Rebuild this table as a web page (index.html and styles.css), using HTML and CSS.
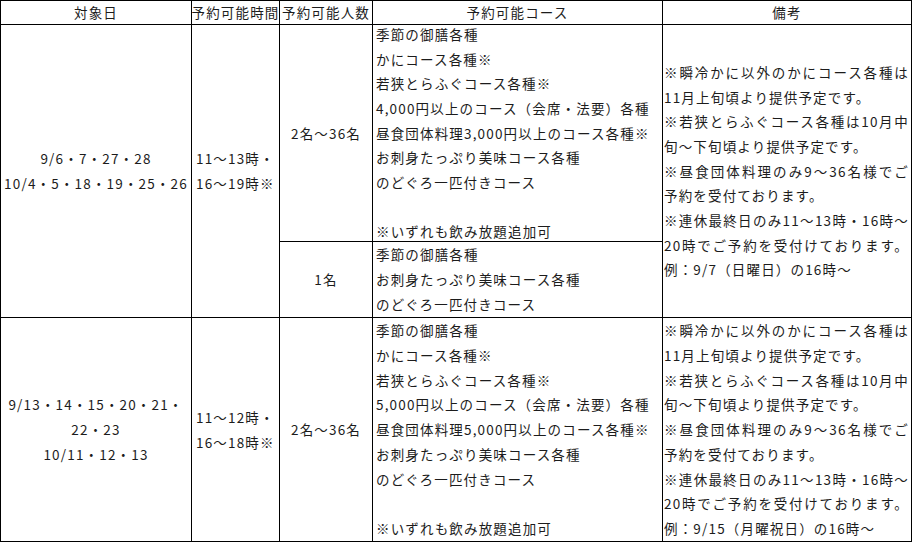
FILE: index.html
```html
<!DOCTYPE html>
<html lang="ja">
<head>
<meta charset="utf-8">
<title>予約可能日</title>
<link rel="stylesheet" href="styles.css">
</head>
<body>
<div class="sheet">
  <div class="cell head">対象日</div>
  <div class="cell head">予約可能時間</div>
  <div class="cell head">予約可能人数</div>
  <div class="cell head">予約可能コース</div>
  <div class="cell head">備考</div>

  <div class="cell center span2"><div>9/6・7・27・28<br>10/4・5・18・19・25・26</div></div>
  <div class="cell left time span2"><div>11〜13時・<br>16〜19時※</div></div>
  <div class="cell center">2名〜36名</div>
  <div class="cell left course"><div>季節の御膳各種<br>かにコース各種※<br>若狭とらふぐコース各種※<br>4,000円以上のコース（会席・法要）各種<br>昼食団体料理3,000円以上のコース各種※<br>お刺身たっぷり美味コース各種<br>のどぐろ一匹付きコース<br><br>※いずれも飲み放題追加可</div></div>
  <div class="cell left note span2"><div>
    <p class="j">※瞬冷かに以外のかにコース各種は</p>
    <p>11月上旬頃より提供予定です。</p>
    <p class="j">※若狭とらふぐコース各種は10月中</p>
    <p>旬〜下旬頃より提供予定です。</p>
    <p class="j">※昼食団体料理のみ9〜36名様でご</p>
    <p>予約を受付ております。</p>
    <p class="j">※連休最終日のみ11〜13時・16時〜</p>
    <p class="j">20時でご予約を受付けております。</p>
    <p>例：9/7（日曜日）の16時〜</p>
  </div></div>
  <div class="cell center">1名</div>
  <div class="cell left course"><div>季節の御膳各種<br>お刺身たっぷり美味コース各種<br>のどぐろ一匹付きコース</div></div>

  <div class="cell center"><div>9/13・14・15・20・21・<br>22・23<br>10/11・12・13</div></div>
  <div class="cell left time"><div>11〜12時・<br>16〜18時※</div></div>
  <div class="cell center">2名〜36名</div>
  <div class="cell left course"><div>季節の御膳各種<br>かにコース各種※<br>若狭とらふぐコース各種※<br>5,000円以上のコース（会席・法要）各種<br>昼食団体料理5,000円以上のコース各種※<br>お刺身たっぷり美味コース各種<br>のどぐろ一匹付きコース<br><br>※いずれも飲み放題追加可</div></div>
  <div class="cell left note"><div>
    <p class="j">※瞬冷かに以外のかにコース各種は</p>
    <p>11月上旬頃より提供予定です。</p>
    <p class="j">※若狭とらふぐコース各種は10月中</p>
    <p>旬〜下旬頃より提供予定です。</p>
    <p class="j">※昼食団体料理のみ9〜36名様でご</p>
    <p>予約を受付ております。</p>
    <p class="j">※連休最終日のみ11〜13時・16時〜</p>
    <p class="j">20時でご予約を受付けております。</p>
    <p>例：9/15（月曜祝日）の16時〜</p>
  </div></div>
</div>
</body>
</html>
```

FILE: styles.css
```css
html, body {
  margin: 0;
  padding: 0;
  background: #ffffff;
}

.sheet {
  display: grid;
  grid-template-columns: 190px 87px 92px 289px 248px;
  grid-template-rows: 23px 216px 75px 223px;
  gap: 1px;
  padding: 1px;
  width: 912px;
  box-sizing: border-box;
  background: #000000;
  font-family: "Noto Sans CJK JP", "Noto Sans", sans-serif;
  font-size: 13.5px;
  letter-spacing: 1.17px;
  line-height: 24.7px;
  color: #1c1c1c;
}

.cell {
  background: #ffffff;
  display: flex;
  flex-direction: column;
  justify-content: center;
  white-space: nowrap;
  min-width: 0;
  min-height: 0;
}

.head {
  align-items: center;
  text-align: center;
}

.center {
  align-items: center;
  text-align: center;
}

.left {
  align-items: stretch;
  text-align: left;
}

.span2 {
  grid-row: span 2;
}

.time {
  padding-left: 4px;
}

.course {
  padding-left: 3px;
}

.note {
  padding: 0 2px 0 1px;
}

.note p {
  margin: 0;
}

.note .j {
  text-align: justify;
  text-align-last: justify;
}
```
